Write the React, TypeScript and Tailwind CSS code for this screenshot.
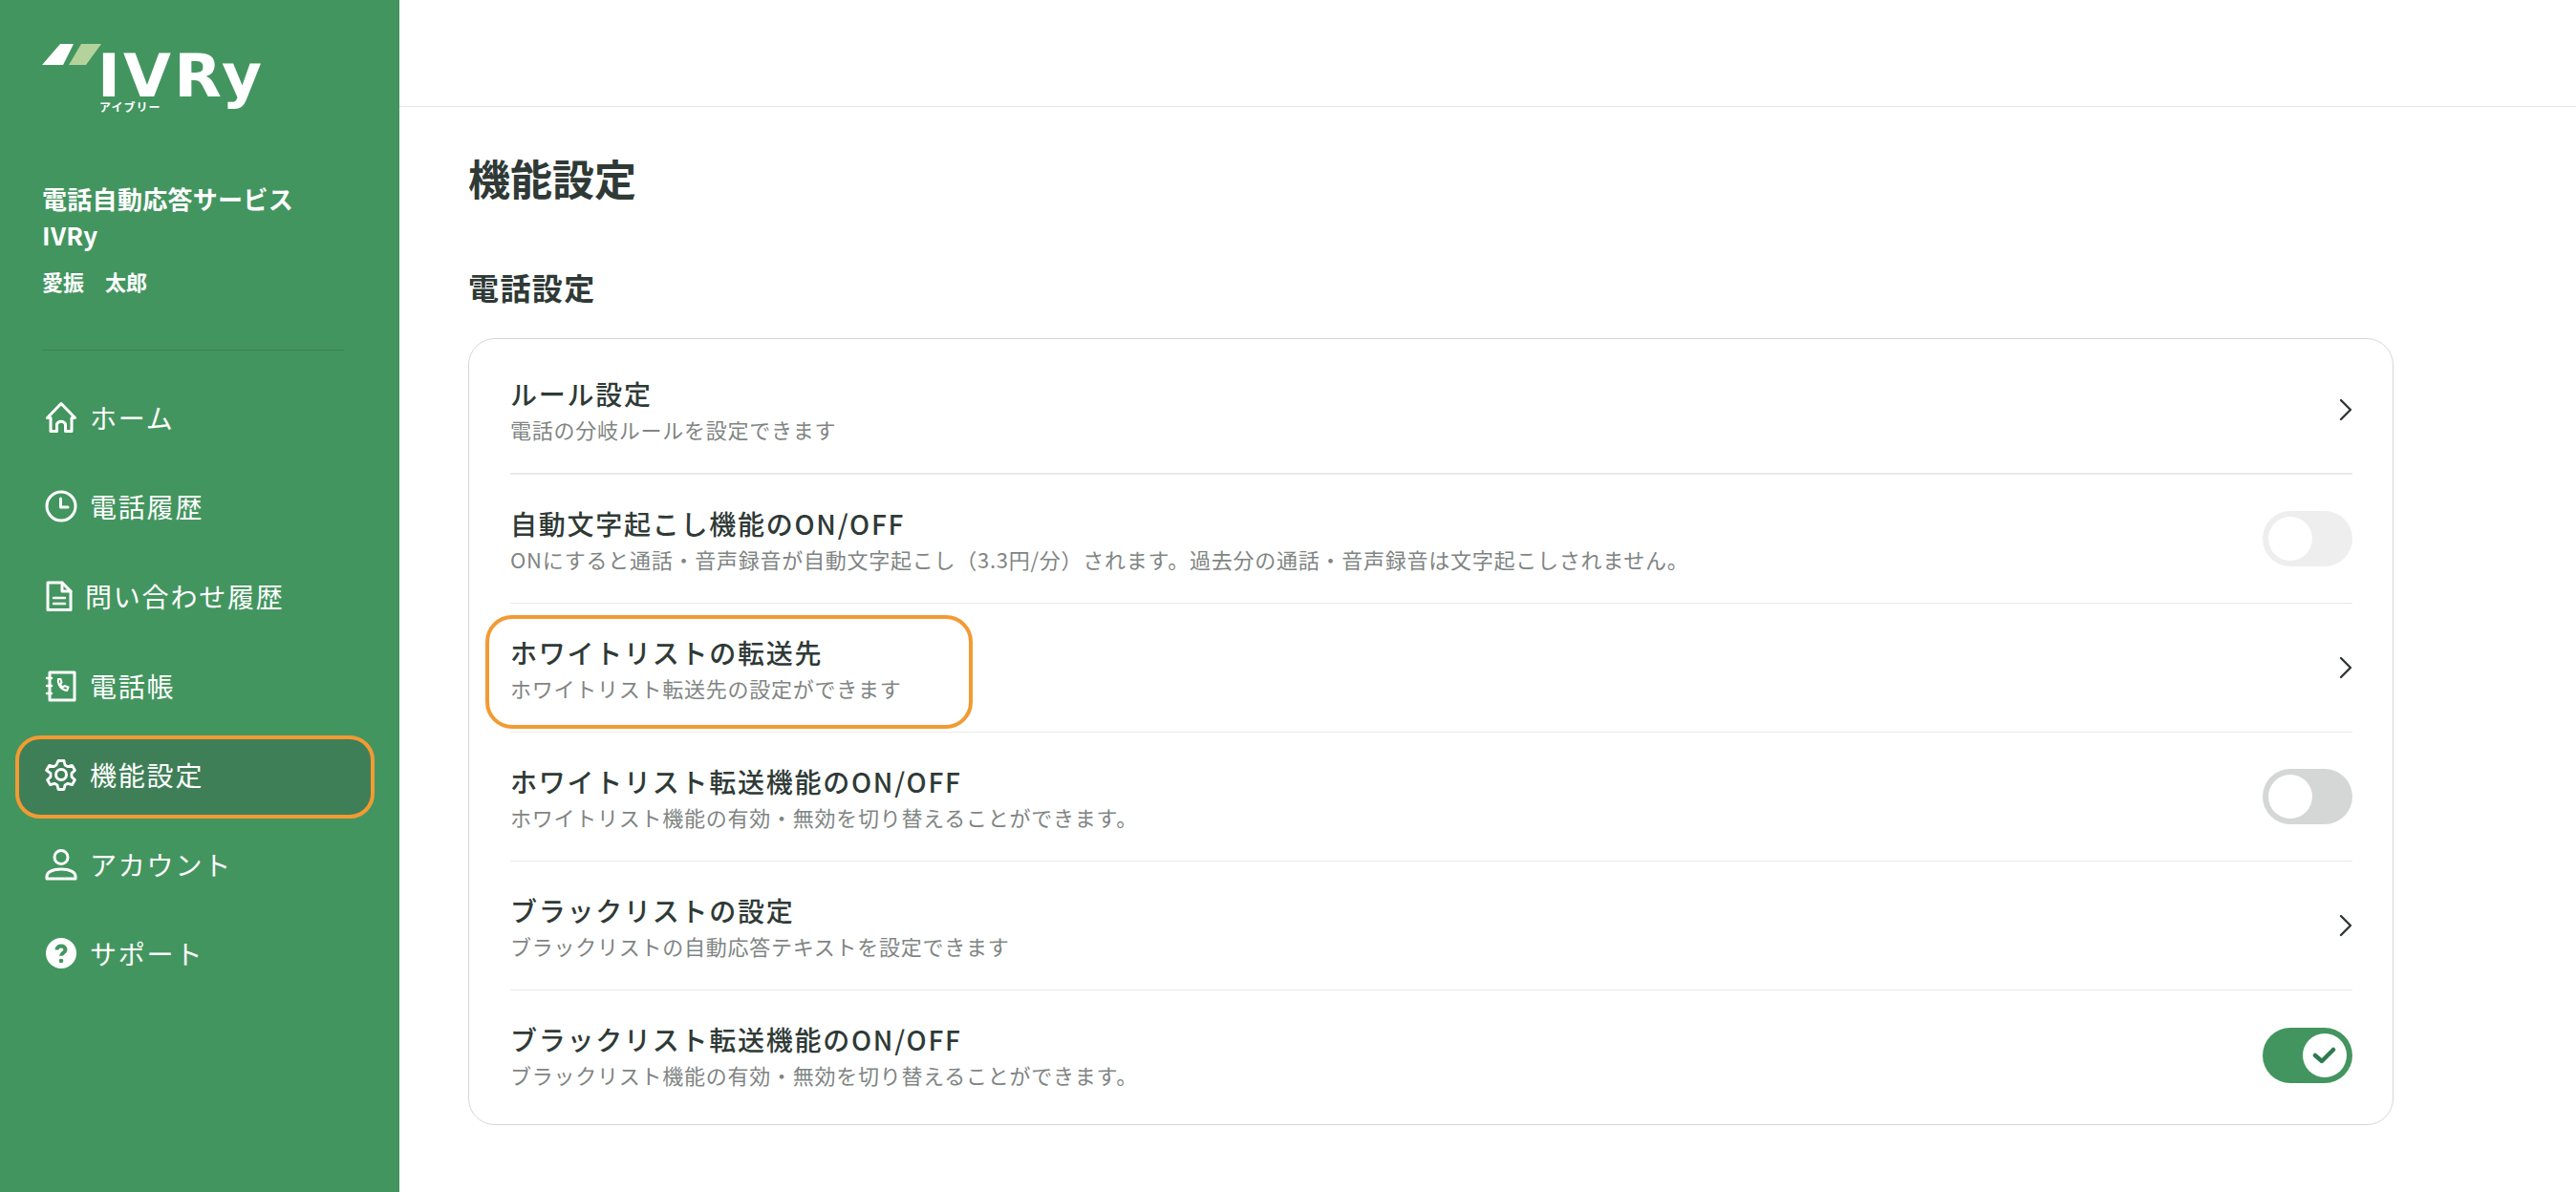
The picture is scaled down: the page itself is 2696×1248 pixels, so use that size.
import type { ReactNode } from 'react'

// ── Icons ──

const iconProps = {
  width: 34,
  height: 34,
  viewBox: '0 0 34 34',
  fill: 'none',
  stroke: 'currentColor',
  strokeWidth: 3,
  strokeLinecap: 'round',
  strokeLinejoin: 'round',
} as const

function HomeIcon() {
  return (
    <svg {...iconProps}>
      <path d="M2.5 17.5 17 2.5l14.5 15h-3.5V31.5h-6.5V24a5 5 0 0 0-9 0v7.5H6V17.5z" />
    </svg>
  )
}

function ClockIcon() {
  return (
    <svg {...iconProps}>
      <circle cx="17" cy="17" r="15" />
      <path d="M16.5 9v9h7.5" />
    </svg>
  )
}

function DocIcon() {
  return (
    <svg {...iconProps}>
      <path d="M3 3h15l9 9v19.5H3z" />
      <path d="M18 3v9h9" />
      <path d="M9 19h12M9 25h12" strokeWidth={2.5} />
    </svg>
  )
}

function PhoneBookIcon() {
  return (
    <svg {...iconProps}>
      <path d="M5 3h26v29H5z" />
      <path d="M2 9h5M2 17h5M2 25h5" strokeWidth={2.5} />
      <path d="M14 10c-1 6 3 11 9 12l1.500-3.500-4-1.500-1.500 1.500c-1.500-.8-2.500-2-3-3.500l1.500-1.500-1-3.500z" strokeWidth={2} />
    </svg>
  )
}

function GearIcon() {
  return (
    <svg {...iconProps} viewBox="0 0 34 34">
      <path d="M14 2.500h6l1 4.500 3 1.700 4.400-1.400 3 5.200-3.400 3.100v3.800l3.400 3.100-3 5.200-4.400-1.400-3 1.700-1 4.500h-6l-1-4.500-3-1.700-4.400 1.400-3-5.200 3.400-3.100v-3.800L1.600 12.500l3-5.200L9 8.700 12 7z" strokeWidth={2.8} />
      <circle cx="17" cy="17" r="5.500" />
    </svg>
  )
}

function UserIcon() {
  return (
    <svg {...iconProps}>
      <circle cx="17" cy="9.500" r="7" />
      <path d="M2 32v-2.500C2 25 8 22 17 22s15 3 15 7.500V32z" />
    </svg>
  )
}

function HelpIcon() {
  return (
    <svg width={34} height={34} viewBox="0 0 34 34">
      <circle cx="17" cy="17" r="16" fill="currentColor" />
      <path
        d="M12.500 13.500c0-2.600 2-4 4.500-4s4.500 1.400 4.500 3.800c0 3.400-4.500 3.200-4.500 6.500"
        fill="none"
        stroke="#43955f"
        strokeWidth={4}
      />
      <circle cx="17" cy="25" r="2.300" fill="#43955f" />
    </svg>
  )
}

function Chevron() {
  return (
    <svg width={14} height={24} viewBox="0 0 14 24" fill="none" stroke="#2f3735" strokeWidth={2.4} strokeLinecap="round" strokeLinejoin="round">
      <path d="M2 2l10 10L2 22" />
    </svg>
  )
}

function Logo() {
  return (
    <div className="relative h-[86px] w-[240px] text-white">
      <svg className="absolute left-0 top-0" width={70} height={24} viewBox="0 0 70 24">
        <path d="M0 22 19 0h14L22 22z" fill="#ffffff" />
        <path d="M28 22 41 0h21L46 22z" fill="#b4d39c" />
      </svg>
      <span className="absolute left-[58px] top-[12px] origin-left scale-x-[1.04] font-['DejaVu_Sans',sans-serif] text-[62px] font-bold leading-[44px] tracking-[3px]">IVRy</span>
      <span className="absolute left-[60px] top-[58px] text-[12px] font-bold leading-[16px] tracking-[1px]">アイブリー</span>
    </div>
  )
}

// ── Toggle ──

function Toggle({ state }: { state: 'disabled' | 'off' | 'on' }) {
  if (state === 'on') {
    return (
      <div className="flex h-[58px] w-[94px] shrink-0 items-center justify-end rounded-full bg-[#43955f] p-[6px]">
        <div className="flex h-[46px] w-[46px] items-center justify-center rounded-full bg-white">
          <svg width={26} height={22} viewBox="0 0 26 22" fill="none" stroke="#2f7a4e" strokeWidth={4.500} strokeLinecap="round" strokeLinejoin="round">
            <path d="M3 11l7 6L22 5" />
          </svg>
        </div>
      </div>
    )
  }
  return (
    <div className={`flex h-[58px] w-[94px] shrink-0 items-center rounded-full p-[6px] ${state === 'off' ? 'bg-[#d5d7d7]' : 'bg-[#eeeeee]'}`}>
      <div className="h-[46px] w-[46px] rounded-full bg-white" />
    </div>
  )
}

// ── Data ──

const NAV: { label: string; icon: ReactNode; gap: string; active?: boolean }[] = [
  { label: 'ホーム', icon: <HomeIcon />, gap: 'gap-[13px]' },
  { label: '電話履歴', icon: <ClockIcon />, gap: 'gap-[13px]' },
  { label: '問い合わせ履歴', icon: <DocIcon />, gap: 'gap-[8px]' },
  { label: '電話帳', icon: <PhoneBookIcon />, gap: 'gap-[13px]' },
  { label: '機能設定', icon: <GearIcon />, gap: 'gap-[13px]', active: true },
  { label: 'アカウント', icon: <UserIcon />, gap: 'gap-[13px]' },
  { label: 'サポート', icon: <HelpIcon />, gap: 'gap-[13px]' },
]

const ROWS: { title: string; sub: string; toggle?: 'disabled' | 'off' | 'on'; mark?: boolean }[] = [
  { title: 'ルール設定', sub: '電話の分岐ルールを設定できます' },
  {
    title: '自動文字起こし機能のON/OFF',
    sub: 'ONにすると通話・音声録音が自動文字起こし（3.3円/分）されます。過去分の通話・音声録音は文字起こしされません。',
    toggle: 'disabled',
  },
  { title: 'ホワイトリストの転送先', sub: 'ホワイトリスト転送先の設定ができます', mark: true },
  { title: 'ホワイトリスト転送機能のON/OFF', sub: 'ホワイトリスト機能の有効・無効を切り替えることができます。', toggle: 'off' },
  { title: 'ブラックリストの設定', sub: 'ブラックリストの自動応答テキストを設定できます' },
  { title: 'ブラックリスト転送機能のON/OFF', sub: 'ブラックリスト機能の有効・無効を切り替えることができます。', toggle: 'on' },
]

export default function App() {
  return (
    <div className="flex h-[1248px] w-[2696px] overflow-hidden bg-white font-['Noto_Sans_CJK_JP',sans-serif]">
      {/* Sidebar */}
      <aside className="flex w-[418px] shrink-0 flex-col bg-[#43955f] text-white">
        <div className="pl-[44px] pt-[46px]">
          <Logo />
        </div>
        <div className="mt-[57px] px-[44px] text-[26px] font-bold leading-[38px] tracking-[0.3px]">
          <div>電話自動応答サービス</div>
          <div>IVRy</div>
        </div>
        <div className="mt-[11px] px-[44px] text-[22px] font-bold leading-[36px]">愛振　太郎</div>
        <div className="mx-[44px] mt-[54px] h-[1px] w-[316px] bg-[#3a8055]" />
        <nav className="mt-[23px] flex flex-col">
          {NAV.map((item) => (
            <div key={item.label} className="relative flex h-[93.6px] items-center pl-[47px]">
              {item.active && (
                <div className="absolute left-[16px] top-[6px] h-[87px] w-[376px] rounded-[26px] border-[4px] border-[#f39a33] bg-[#3f7f58]" />
              )}
              <div className={`relative flex items-center ${item.gap}`}>
                {item.icon}
                <span className="text-[28px] leading-[40px] tracking-[1.8px]">{item.label}</span>
              </div>
            </div>
          ))}
        </nav>
      </aside>

      {/* Main */}
      <main className="min-w-0 flex-1">
        <div className="h-[112px] border-b border-[#e4e6e5]" />
        <div className="pl-[72px] text-[#2f3a36]">
          <h1 className="mt-[42px] text-[44px] font-bold leading-[64px]">機能設定</h1>
          <h2 className="mt-[59px] text-[32px] font-bold leading-[46px] tracking-[1.4px]">電話設定</h2>
          <div className="mt-[31px] w-[2015px] rounded-[28px] border border-[#d5d7d7] pb-[5px] pl-[43px] pr-[42px] pt-[7px]">
            {ROWS.map((row, i) => (
              <div
                key={row.title}
                className={`relative flex h-[135px] items-center justify-between ${i < ROWS.length - 1 ? (i === 0 ? 'border-b-2 border-[#e8eaea]' : 'border-b border-[#e8eaea]') : ''}`}
              >
                {row.mark && (
                  <div className="absolute left-[-26px] top-[12px] h-[119px] w-[510px] rounded-[28px] border-[4px] border-[#f39a33]" />
                )}
                <div>
                  <div className="text-[28px] font-medium leading-[38px] tracking-[1.75px]">{row.title}</div>
                  <div className="mt-[3px] text-[22px] leading-[30px] tracking-[0.75px] text-[#7f8583]">{row.sub}</div>
                </div>
                {row.toggle ? <Toggle state={row.toggle} /> : <Chevron />}
              </div>
            ))}
          </div>
        </div>
      </main>
    </div>
  )
}
